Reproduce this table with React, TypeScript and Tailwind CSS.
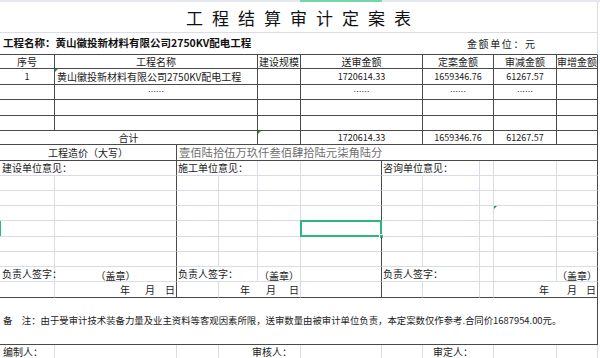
import React from "react";

const DD = "border-r border-b border-r-[#4a4a4a] border-b-[#4a4a4a]";
const LL = "border-r border-b border-r-[#d9dbe6] border-b-[#d9dbe6]";
const DL = "border-r border-b border-r-[#4a4a4a] border-b-[#d9dbe6]";
const LD = "border-r border-b border-r-[#d9dbe6] border-b-[#4a4a4a]";

function C({ className = "", children }: { className?: string; children?: React.ReactNode }) {
  return (
    <div className={"shrink-0 h-full flex items-center whitespace-nowrap leading-none " + className}>
      {children}
    </div>
  );
}

function Tri() {
  return (
    <span className="absolute left-0 top-0 w-0 h-0 border-t-[3px] border-t-[#1f9d3a] border-r-[3px] border-r-transparent" />
  );
}

function PlainRow({ h, tri, sel }: { h: string; tri?: boolean; sel?: boolean }) {
  return (
    <div className={"flex " + h}>
      <C className={`w-[55px] relative ${LL}`}>
        {sel && <span className="absolute left-0 top-0 bottom-0 w-[1px] bg-[#2fb67e]" />}
      </C>
      <C className={`w-[122px] ${DL}`} />
      <C className={`w-[42px] ${LL}`} />
      <C className={`w-[39px] ${LL}`} />
      <C className={`w-[43px] ${LL}`} />
      <C className={`w-[81px] relative ${DL}`}>
        {sel && (
          <>
            <span className="absolute -left-[1px] -top-[1px] -right-[1px] -bottom-[1px] border-2 border-[#2fb67e]" />
            <span className="absolute -right-[3px] -bottom-[3px] w-[5px] h-[5px] bg-[#2fb67e] border border-white" />
          </>
        )}
      </C>
      <C className={`w-[41px] ${LL}`} />
      <C className={`w-[57px] ${LL}`} />
      <C className={`w-[14px] ${LL}`} />
      <C className={`w-[63px] relative ${LL}`}>{tri && <Tri />}</C>
      <C className={`w-[41px] ${DL}`} />
      <C className="w-[2px]" />
    </div>
  );
}

export default function App() {
  return (
    <div className="w-[600px] h-[358px] overflow-hidden bg-white text-[10px] text-[#1a1a1a] font-['Noto_Sans_CJK_SC','Noto_Sans_CJK_JP',sans-serif]">
      {/* top strip */}
      <div className="flex h-[2px]">
        <div className="w-[300px] bg-[#e6e8ef]" />
        <div className="w-[82px] bg-[#72d7ab]" />
        <div className="flex-1 bg-[#e6e8ef]" />
      </div>
      {/* title */}
      <div className="flex h-[31px]">
        <div className="w-[598px] flex items-center justify-center border-r border-b border-r-[#d9dbe6] border-b-[#d9dbe6]">
          <span className="text-[17px] font-normal tracking-[9px] pl-[9px] pt-[1px] leading-none text-[#111]">
            工程结算审计定案表
          </span>
        </div>
      </div>
      {/* project name row */}
      <div className="flex h-[22px]">
        <div className="w-[598px] flex items-center border-r border-b border-r-[#d9dbe6] border-b-[#4a4a4a] leading-none">
          <span className="w-[467px] pl-[3px] text-[10.5px] font-bold text-[#111]">
            工程名称：黄山徽投新材料有限公司2750KV配电工程
          </span>
          <span className="tracking-[1.6px]">金额单位：元</span>
        </div>
      </div>
      {/* header */}
      <div className="flex h-[14px]">
        <C className={`w-[55px] justify-center ${DD}`}>序号</C>
        <C className={`w-[203px] justify-center ${DD}`}>工程名称</C>
        <C className={`w-[43px] justify-center ${DD}`}>建设规模</C>
        <C className={`w-[122px] justify-center ${DD}`}>送审金额</C>
        <C className={`w-[71px] justify-center ${DD}`}>定案金额</C>
        <C className={`w-[63px] justify-center ${DD}`}>审减金额</C>
        <C className={`w-[41px] justify-center ${DD}`}>审增金额</C>
        <C className="w-[2px]" />
      </div>
      {/* row 1 */}
      <div className="flex h-[16px]">
        <C className={`w-[55px] justify-center text-[9px] ${DD}`}>1</C>
        <C className={`w-[203px] relative pl-[2px] ${DD}`}>
          <Tri />
          黄山徽投新材料有限公司2750KV配电工程
        </C>
        <C className={`w-[43px] ${DD}`} />
        <C className={`w-[122px] justify-center text-[9px] ${DD}`}>1720614.33</C>
        <C className={`w-[71px] justify-center text-[9px] ${DD}`}>1659346.76</C>
        <C className={`w-[63px] justify-center text-[9px] ${DD}`}>61267.57</C>
        <C className={`w-[41px] ${DD}`} />
        <C className="w-[2px]" />
      </div>
      {/* row 2 dots */}
      <div className="flex h-[15px]">
        <C className={`w-[55px] ${DD}`} />
        <C className={`w-[203px] justify-center text-[8px] ${DD}`}>……</C>
        <C className={`w-[43px] ${DD}`} />
        <C className={`w-[122px] justify-center text-[8px] ${DD}`}>……</C>
        <C className={`w-[71px] justify-center text-[8px] ${DD}`}>……</C>
        <C className={`w-[63px] justify-center text-[8px] ${DD}`}>……</C>
        <C className={`w-[41px] ${DD}`} />
        <C className="w-[2px]" />
      </div>
      {/* row 3 */}
      <div className="flex h-[16px]">
        <C className={`w-[55px] ${DD}`} />
        <C className={`w-[203px] ${DD}`} />
        <C className={`w-[43px] ${DD}`} />
        <C className={`w-[122px] ${DD}`} />
        <C className={`w-[71px] ${DD}`} />
        <C className={`w-[63px] ${DD}`} />
        <C className={`w-[41px] ${DD}`} />
        <C className="w-[2px]" />
      </div>
      {/* row 4 */}
      <div className="flex h-[15px]">
        <C className={`w-[55px] ${DD}`} />
        <C className={`w-[203px] ${DD}`} />
        <C className={`w-[43px] ${DD}`} />
        <C className={`w-[122px] ${DD}`} />
        <C className={`w-[71px] ${DD}`} />
        <C className={`w-[63px] ${DD}`} />
        <C className={`w-[41px] ${DD}`} />
        <C className="w-[2px]" />
      </div>
      {/* total */}
      <div className="flex h-[14px]">
        <C className={`w-[258px] justify-center ${DD}`}>合计</C>
        <C className={`w-[43px] relative ${DD}`}>
          <Tri />
        </C>
        <C className={`w-[122px] justify-center text-[9px] ${DD}`}>1720614.33</C>
        <C className={`w-[71px] justify-center text-[9px] ${DD}`}>1659346.76</C>
        <C className={`w-[63px] justify-center text-[9px] ${DD}`}>61267.57</C>
        <C className={`w-[41px] ${DD}`} />
        <C className="w-[2px]" />
      </div>
      {/* cost in words */}
      <div className="flex h-[16px]">
        <C className={`w-[177px] justify-center ${DD}`}>工程造价（大写）</C>
        <C className={`w-[421px] pl-[2px] text-[11.3px] text-[#6e6e6e] ${DD}`}>
          壹佰陆拾伍万玖仟叁佰肆拾陆元柒角陆分
        </C>
        <C className="w-[2px]" />
      </div>
      {/* opinions header */}
      <div className="flex h-[15px]">
        <C className={`w-[177px] pl-[2px] ${DL}`}>建设单位意见：</C>
        <C className={`w-[81px] pl-[1px] ${LL}`}>施工单位意见：</C>
        <C className={`w-[43px] ${LL}`} />
        <C className={`w-[81px] ${DL}`} />
        <C className={`w-[98px] pl-[1px] ${LL}`}>咨询单位意见：</C>
        <C className={`w-[14px] ${LL}`} />
        <C className={`w-[63px] ${LL}`} />
        <C className={`w-[41px] ${DL}`} />
        <C className="w-[2px]" />
      </div>
      <PlainRow h="h-[15px]" />
      <PlainRow h="h-[15px]" />
      <PlainRow h="h-[15px]" tri />
      <PlainRow h="h-[16px]" sel />
      <PlainRow h="h-[15px]" />
      <PlainRow h="h-[15px]" />
      {/* signature row */}
      <div className="flex h-[15px]">
        <C className={`w-[55px] pl-[2px] ${LL}`}>负责人签字：</C>
        <C className={`w-[122px] justify-center ${DL}`}>
          <span className="translate-y-[2px]">（盖章）</span>
        </C>
        <C className={`w-[81px] pl-[1px] ${LL}`}>负责人签字：</C>
        <C className={`w-[43px] justify-center ${LL}`}>
          <span className="translate-y-[2px]">（盖章）</span>
        </C>
        <C className={`w-[81px] ${DL}`} />
        <C className={`w-[98px] pl-[1px] ${LL}`}>负责人签字：</C>
        <C className={`w-[14px] ${LL}`} />
        <C className={`w-[63px] ${LL}`} />
        <C className={`w-[41px] justify-center ${DL}`}>
          <span className="translate-y-[2px]">（盖章）</span>
        </C>
        <C className="w-[2px]" />
      </div>
      {/* date row */}
      <div className="flex h-[16px]">
        <C className={`w-[55px] ${LD}`} />
        <C className={`w-[122px] justify-end ${DD}`}>
          <span>年</span>
          <span className="ml-[15px]">月</span>
          <span className="ml-[10px] mr-[1px]">日</span>
        </C>
        <C className={`w-[42px] ${LD}`} />
        <C className={`w-[82px] justify-end ${LD}`}>
          <span>年</span>
          <span className="ml-[16px]">月</span>
          <span className="ml-[13px] mr-[1px]">日</span>
        </C>
        <C className={`w-[81px] ${DD}`} />
        <C className={`w-[41px] ${LD}`} />
        <C className={`w-[57px] ${LD}`} />
        <C className={`w-[14px] ${LD}`} />
        <C className={`w-[104px] justify-end ${DD}`}>
          <span>年</span>
          <span className="ml-[18px]">月</span>
          <span className="ml-[9px] mr-[1px]">日</span>
        </C>
        <C className="w-[2px]" />
      </div>
      {/* remarks */}
      <div className="flex h-[47px]">
        <C className={`w-[598px] pl-[3px] text-[9.4px] ${DD}`}>
          备　注：由于受审计技术装备力量及业主资料等客观因素所限，送审数量由被审计单位负责，本定案数仅作参考.合同价1687954.00元。
        </C>
        <C className="w-[2px]" />
      </div>
      {/* bottom */}
      <div className="flex h-[13px]">
        <C className="w-[55px] pl-[3px] border-r border-r-[#d9dbe6]">编制人：</C>
        <C className="w-[122px] border-r border-r-[#d9dbe6]" />
        <C className="w-[42px] border-r border-r-[#d9dbe6]" />
        <C className="w-[82px] pl-[33px] border-r border-r-[#d9dbe6]">审核人：</C>
        <C className="w-[81px] border-r border-r-[#d9dbe6]" />
        <C className="w-[41px] border-r border-r-[#d9dbe6]" />
        <C className="w-[71px] pl-[10px] border-r border-r-[#d9dbe6]">审定人：</C>
        <C className="w-[63px] border-r border-r-[#d9dbe6]" />
        <C className="w-[41px] border-r border-r-[#d9dbe6]" />
        <C className="w-[2px]" />
      </div>
    </div>
  );
}
